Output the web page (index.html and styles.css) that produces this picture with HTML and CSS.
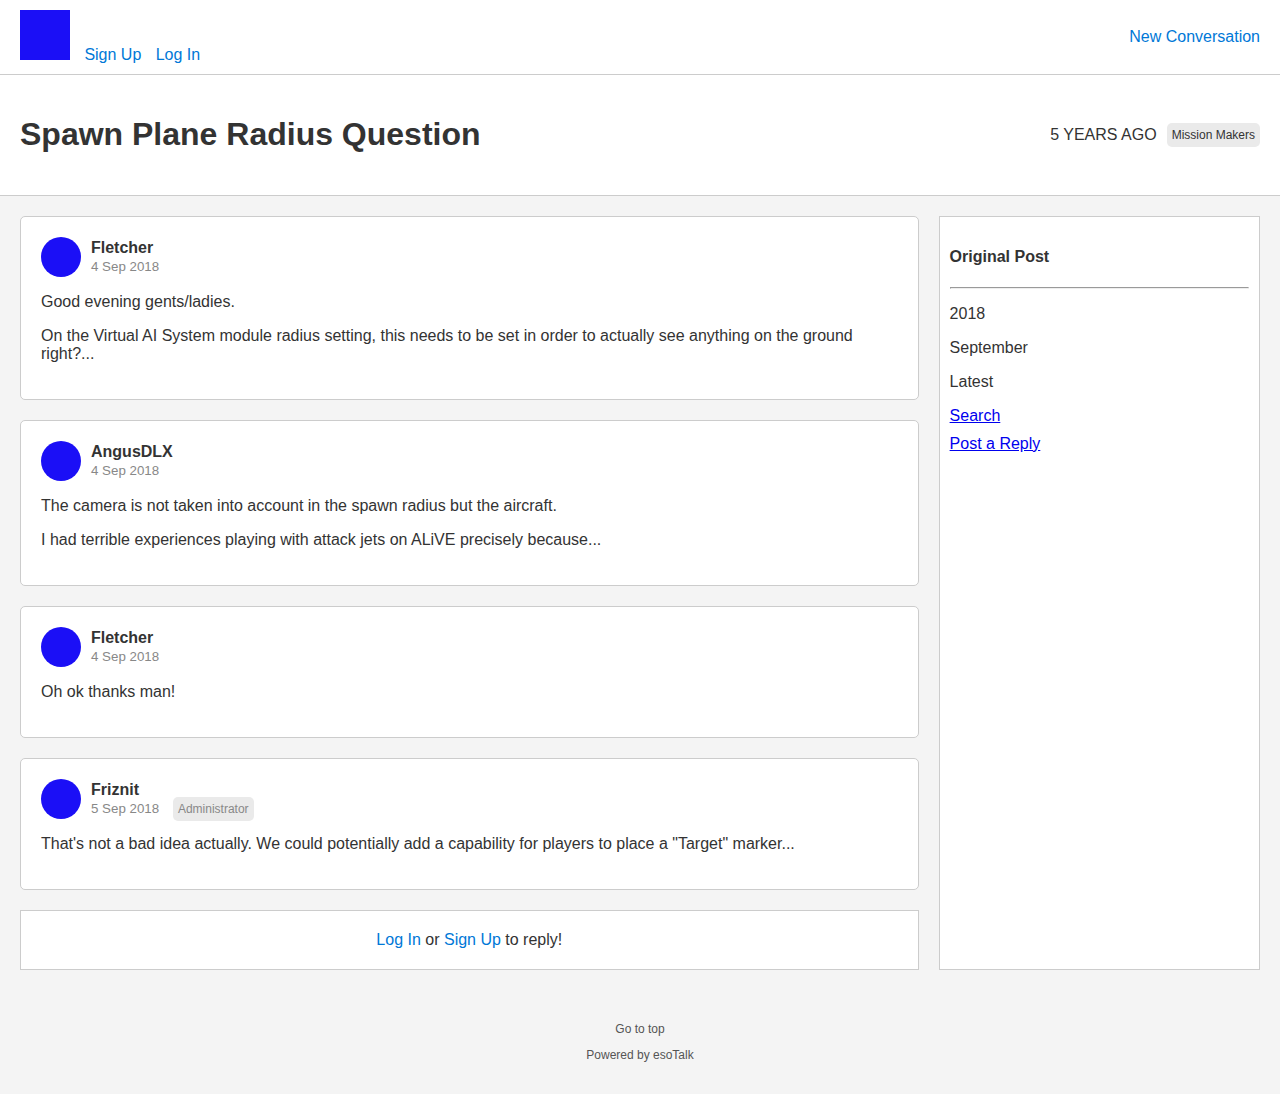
FILE: index.html
```html
<!DOCTYPE html>
<html lang="en">
<head>
<meta charset="utf-8">
<title>Spawn Plane Radius Question</title>
<link rel="stylesheet" href="styles.css">
</head>
<body>
<header class="topbar">
  <nav class="nav"><span class="logo"></span><a href="#">Sign Up</a><a href="#">Log In</a></nav>
  <a href="#">New Conversation</a>
</header>
<section class="title-bar">
  <h1>Spawn Plane Radius Question</h1>
  <div class="meta"><span>5 YEARS AGO</span><span class="tag">Mission Makers</span></div>
</section>
<main class="content">
  <div class="posts">
    <article class="post">
      <div class="author"><span class="avatar"></span><div><div class="name">Fletcher</div><div class="date">4 Sep 2018</div></div></div>
      <p>Good evening gents/ladies.</p>
      <p>On the Virtual AI System module radius setting, this needs to be set in order to actually see anything on the ground right?...</p>
    </article>
    <article class="post">
      <div class="author"><span class="avatar"></span><div><div class="name">AngusDLX</div><div class="date">4 Sep 2018</div></div></div>
      <p>The camera is not taken into account in the spawn radius but the aircraft.</p>
      <p>I had terrible experiences playing with attack jets on ALiVE precisely because...</p>
    </article>
    <article class="post">
      <div class="author"><span class="avatar"></span><div><div class="name">Fletcher</div><div class="date">4 Sep 2018</div></div></div>
      <p>Oh ok thanks man!</p>
    </article>
    <article class="post">
      <div class="author"><span class="avatar"></span><div><div class="name">Friznit</div><div class="date">5 Sep 2018<span class="tag role">Administrator</span></div></div></div>
      <p>That's not a bad idea actually. We could potentially add a capability for players to place a "Target" marker...</p>
    </article>
    <div class="reply"><a href="#">Log In</a> or <a href="#">Sign Up</a> to reply!</div>
  </div>
  <aside class="sidebar">
    <h4>Original Post</h4>
    <hr>
    <p>2018</p>
    <p>September</p>
    <p>Latest</p>
    <a href="#">Search</a>
    <a href="#">Post a Reply</a>
  </aside>
</main>
<footer class="footer">
  <p>Go to top</p>
  <p>Powered by esoTalk</p>
</footer>
</body>
</html>
```
FILE: styles.css
```css
* { box-sizing: border-box; }
body {
  margin: 0;
  background: #f4f4f4;
  color: #333;
  font: 16px/18px "Liberation Sans", Arial, sans-serif;
}
a { color: #0078d7; text-decoration: none; }
.topbar {
  display: flex;
  justify-content: space-between;
  align-items: center;
  height: 75px;
  padding: 0 20px;
  background: #fff;
  border-bottom: 1px solid #ccc;
}
.nav { display: flex; align-items: flex-end; height: 54px; }
.nav a { margin-left: 14.4px; }
.logo { width: 50px; height: 50px; margin-bottom: 4px; background: #1b0ff6; }
.title-bar {
  display: flex;
  justify-content: space-between;
  align-items: center;
  height: 121px;
  padding: 0 20px;
  background: #fff;
  border-bottom: 1px solid #ccc;
}
h1 { margin: 0 0 2px; font-size: 32px; line-height: 36px; }
.meta { display: flex; align-items: center; gap: 10px; }
.tag {
  padding: 5px;
  border-radius: 5px;
  background: #eaeaea;
  font-size: 12px;
  line-height: 14px;
}
.content {
  display: grid;
  grid-template-columns: 898.6px 321.4px;
  gap: 20px;
  padding: 20px;
}
.posts { display: flex; flex-direction: column; gap: 20px; }
.post {
  padding: 20px 20px 36px;
  background: #fff;
  border: 1px solid #ccc;
  border-radius: 5px;
}
.post p { margin: 16px 0 0; }
.author { display: flex; gap: 10px; height: 40px; }
.avatar { width: 40px; height: 40px; border-radius: 50%; background: #1b0ff6; }
.name { padding-top: 2px; font-weight: bold; }
.date { color: #888; font-size: 13.333px; line-height: 20px; }
.role { margin-left: 13.7px; }
.reply {
  height: 60px;
  padding: 20px;
  background: #fff;
  border: 1px solid #ccc;
  text-align: center;
}
.sidebar { padding: 10px; background: #fff; border: 1px solid #ccc; }
.sidebar h4 { margin: 21px 0; }
.sidebar hr { margin: 8px 0 16px; }
.sidebar p { margin: 16px 0; }
.sidebar a {
  display: block;
  margin-bottom: 10px;
  color: #0000ee;
  text-decoration: underline;
}
.footer {
  padding: 32px 20px;
  color: #555;
  font-size: 12px;
  line-height: 14px;
  text-align: center;
}
.footer p { margin: 0 0 12px; }
```
